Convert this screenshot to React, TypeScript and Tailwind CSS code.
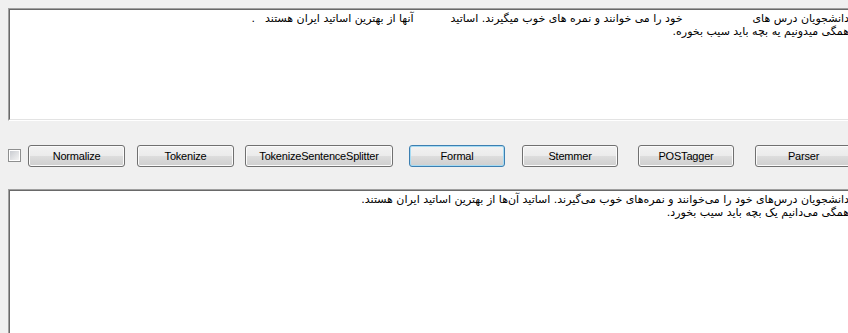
import clsx from "clsx";

const persian = "font-['DejaVu_Sans',sans-serif] text-[11px] leading-[13px] text-black";

const Sunken = ({ className, children }: { className?: string; children?: React.ReactNode }) => {
  return (
    <div className={clsx("border border-t-[#a0a0a0] border-l-[#a0a0a0] border-b-[#ffffff] border-r-[#ffffff]", className)}>
      <div className="h-full border border-t-[#696969] border-l-[#696969] border-b-[#e3e3e3] border-r-[#e3e3e3] bg-white">
        {children}
      </div>
    </div>
  );
};

const Btn = ({ label, className, focused }: { label: string; className: string; focused?: boolean }) => {
  return (
    <button
      className={clsx(
        "h-[22px] shrink-0 rounded-[3px] border font-['Liberation_Sans',Arial,sans-serif] text-[11px] tracking-[-0.2px] text-black",
        "bg-[linear-gradient(#f2f2f2_0%,#ebebeb_50%,#dddddd_50%,#cfcfcf_100%)]",
        focused
          ? "border-[#3c7fb1] shadow-[inset_0_0_0_1px_#a6dbf3]"
          : "border-[#707070] shadow-[inset_0_0_0_1px_#fbfbfb]",
        className
      )}
    >
      {label}
    </button>
  );
};

export default function App() {
  return (
    <div className="relative flex h-[333px] w-[848px] flex-col overflow-hidden bg-[#f0f0f0]">
      {/* input text */}
      <Sunken className="ml-2 mt-2 h-[113px] w-[844px] shrink-0">
        <div dir="rtl" className={clsx(persian, "whitespace-pre pr-[1px] pt-[2px] text-right")}>
          <div>
            دانشجویان درس های
            <span className="inline-block w-[70px]" />
            خود را می خوانند و نمره های خوب میگیرند. اساتید
            <span className="inline-block w-[37px]" />
            آنها از بهترین اساتید ایران هستند
            <span className="inline-block w-[10px]" />.
          </div>
          <div>همگی میدونیم یه بچه باید سیب بخوره.</div>
        </div>
      </Sunken>

      {/* toolbar */}
      <div className="mt-[24px] flex h-[22px] shrink-0 items-center">
        <div className="ml-2 mt-[-2px] h-[13px] w-[13px] shrink-0 border border-[#8e8f8f] bg-white p-[1px]">
          <div className="h-full w-full bg-[linear-gradient(135deg,#c9ccd1,#f4f4f4)]" />
        </div>
        <Btn label="Normalize" className="ml-[7px] w-[97px]" />
        <Btn label="Tokenize" className="ml-[12px] w-[97px]" />
        <Btn label="TokenizeSentenceSplitter" className="ml-[11px] w-[148px]" />
        <Btn label="Formal" className="ml-[16px] w-[96px]" focused />
        <Btn label="Stemmer" className="ml-[17px] w-[96px]" />
        <Btn label="POSTagger" className="ml-[20px] w-[96px]" />
        <Btn label="Parser" className="ml-[21px] w-[97px]" />
      </div>

      {/* output text */}
      <Sunken className="ml-2 mt-[22px] h-[160px] w-[844px] shrink-0">
        <div dir="rtl" className={clsx(persian, "pr-[1px] pt-[2px] text-right")}>
          <div>
            دانشجویان درس‌های خود را می‌خوانند و نمره‌های خوب می‌گیرند. اساتید آن‌ها از بهترین اساتید ایران هستند.
          </div>
          <div>همگی می‌دانیم یک بچه باید سیب بخورد.</div>
        </div>
      </Sunken>
    </div>
  );
}
